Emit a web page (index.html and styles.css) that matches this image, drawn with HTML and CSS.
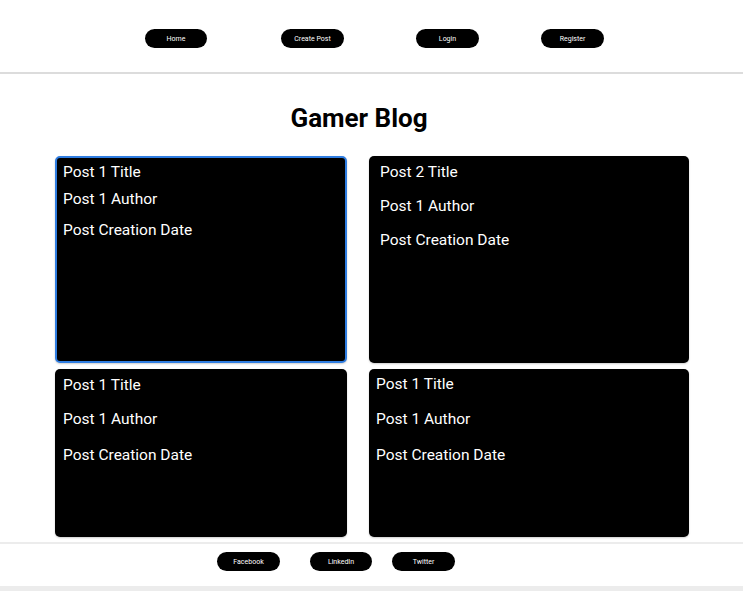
FILE: index.html
```html
<!DOCTYPE html>
<html>
<head>
<meta charset="utf-8">
<link rel="stylesheet" href="styles.css">
</head>
<body>
<header class="header">
  <nav class="nav">
    <a class="pill nav-home">Home</a>
    <a class="pill nav-create">Create Post</a>
    <a class="pill nav-login">Login</a>
    <a class="pill nav-register">Register</a>
  </nav>
</header>
<main class="main">
  <h1 class="title">Gamer Blog</h1>
  <section class="grid">
    <article class="card card-a">
      <p class="line l1">Post 1 Title</p>
      <p class="line l2">Post 1 Author</p>
      <p class="line l3">Post Creation Date</p>
    </article>
    <article class="card card-b">
      <p class="line">Post 2 Title</p>
      <p class="line">Post 1 Author</p>
      <p class="line">Post Creation Date</p>
    </article>
    <article class="card card-c">
      <p class="line">Post 1 Title</p>
      <p class="line">Post 1 Author</p>
      <p class="line">Post Creation Date</p>
    </article>
    <article class="card card-d">
      <p class="line">Post 1 Title</p>
      <p class="line">Post 1 Author</p>
      <p class="line">Post Creation Date</p>
    </article>
  </section>
</main>
<footer class="footer">
  <a class="pill foot-fb">Facebook</a>
  <a class="pill foot-li">LinkedIn</a>
  <a class="pill foot-tw">Twitter</a>
</footer>
<div class="bottom"></div>
</body>
</html>
```
FILE: styles.css
```css
* { box-sizing: border-box; }
html, body { margin: 0; padding: 0; }
body {
  background: #ffffff;
  font-family: Roboto, "Liberation Sans", sans-serif;
  width: 743px;
  height: 591px;
  overflow: hidden;
}
.header {
  height: 74px;
  border-bottom: 2px solid #dcdcdc;
  padding-top: 29px;
}
.nav {
  display: flex;
  padding-left: 145px;
}
.pill {
  display: flex;
  align-items: center;
  justify-content: center;
  width: 62px;
  height: 19px;
  border-radius: 10px;
  background: #000;
  color: #fff;
  font-size: 7px;
  text-decoration: none;
}
.nav-create { margin-left: 74px; width: 63px; }
.nav-login { margin-left: 72px; width: 63px; }
.nav-register { margin-left: 62px; width: 63px; }

.main { padding: 0 0 0 55px; height: 468px; }
.title {
  margin: 0;
  padding: 28px 0 0 0;
  width: 608px;
  text-align: center;
  font-size: 26px;
  font-weight: 700;
  line-height: 32px;
  height: 82px;
  color: #000;
}
.grid {
  display: grid;
  grid-template-columns: 292px 320px;
  grid-template-rows: 207px 168px;
  column-gap: 22px;
  row-gap: 6px;
}
.card {
  background: #000;
  border-radius: 5px;
  color: #fff;
  display: flex;
  flex-direction: column;
  box-shadow: 0 1px 2px rgba(0,0,0,0.2);
}
.line {
  margin: 0;
  font-size: 15.5px;
  line-height: 20px;
}
.card-a {
  border: 2px solid #2f7de1;
  padding: 4px 6px;
  gap: 7px;
}
.card-a .l3 { margin-top: 4px; }
.card-b { padding: 6px 11px; gap: 14px; }
.card-c { padding: 6px 8px; gap: 14px; }
.card-c .line:last-child { margin-top: 2px; }
.card-d { padding: 5px 7px; gap: 15px; }
.card-d .line:last-child { margin-top: 1px; }

.footer {
  height: 44px;
  border-top: 2px solid #ececec;
  display: flex;
  align-items: flex-start;
  padding: 8px 0 0 217px;
}
.foot-fb { width: 63px; }
.foot-li { margin-left: 30px; }
.foot-tw { margin-left: 20px; width: 63px; }
.bottom { height: 5px; background: #ececec; }
```
